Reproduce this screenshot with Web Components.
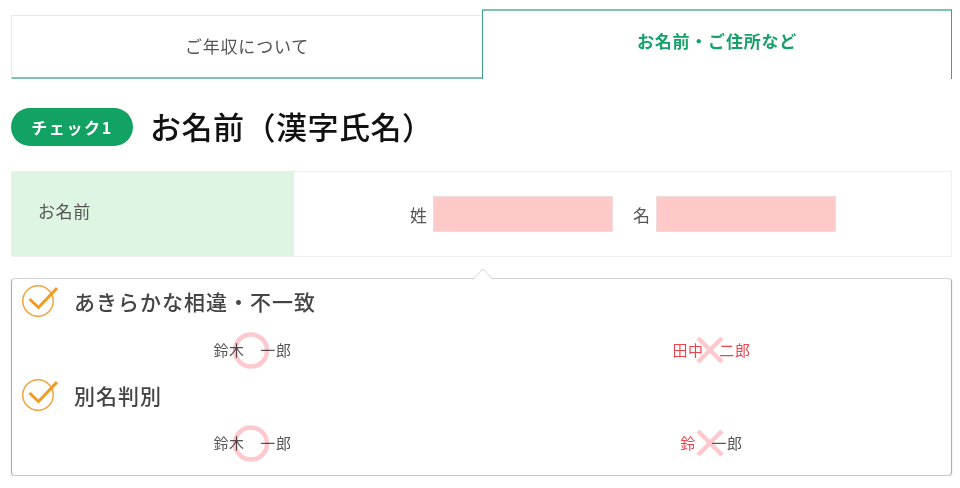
<!DOCTYPE html>
<html lang="ja">
<head>
<meta charset="utf-8">
<title>お名前</title>
<style>
html, body { margin: 0; background: #fff; }
body { font-family: "Noto Sans CJK JP", "Noto Sans", sans-serif; color: #444; }
</style>
</head>
<body>
<check-page>
    <tab-bar>
        <tab-item>ご年収について</tab-item>
        <tab-item active>お名前・ご住所など</tab-item>
    </tab-bar>
    <check-heading label="チェック1">お名前（漢字氏名）</check-heading>
    <name-form></name-form>
    <check-panel>
        <check-group title="あきらかな相違・不一致">
            <name-sample mark="ok"><span>鈴木　一郎</span></name-sample>
            <name-sample mark="ng"><span style="color:#ec444c">田中　二郎</span></name-sample>
        </check-group>
        <check-group title="別名判別">
            <name-sample mark="ok"><span>鈴木　一郎</span></name-sample>
            <name-sample mark="ng"><span style="color:#ec444c">鈴</span><span>　一郎</span></name-sample>
        </check-group>
    </check-panel>
</check-page>

<script>
class CheckPage extends HTMLElement {
    constructor() {
        super();
        let shadowRoot = this.attachShadow({mode: 'open'});
        shadowRoot.innerHTML = `
            <style>
                :host { display: block; width: 941px; padding: 9px 8px 0 11px; }
            </style>
            <slot></slot>`;
    }
}

class TabBar extends HTMLElement {
    constructor() {
        super();
        let shadowRoot = this.attachShadow({mode: 'open'});
        shadowRoot.innerHTML = `
            <style>
                :host { display: grid; grid-template-columns: 471px 470px; height: 70px; align-items: end; }
            </style>
            <slot></slot>`;
    }
}

class TabItem extends HTMLElement {
    constructor() {
        super();
        let shadowRoot = this.attachShadow({mode: 'open'});
        shadowRoot.innerHTML = `
            <style>
                :host {
                    display: flex; justify-content: center; align-items: center; box-sizing: border-box;
                    height: 64px; padding-bottom: 2px; font-size: 17px; letter-spacing: .8px; color: #555;
                    border: 1px solid #e8e8e8; border-right: 0; border-bottom: 2px solid #7ec4ab;
                }
                :host([active]) {
                    height: 70px; padding-bottom: 9px; color: #16a06a; font-weight: 700;
                    border: 1px solid #3f9f86; border-top: 2px solid #7ec4ab; border-bottom: 0;
                }
            </style>
            <slot></slot>`;
    }
}

class CheckHeading extends HTMLElement {
    constructor() {
        super();
        let shadowRoot = this.attachShadow({mode: 'open'});
        shadowRoot.innerHTML = `
            <style>
                :host { display: flex; align-items: center; gap: 17px; height: 38px; margin: 29px 0 25px; }
                .badge {
                    box-sizing: border-box; width: 122px; height: 38px; padding-bottom: 1px; border-radius: 19px;
                    background: #12a263; color: #fff;
                    display: flex; align-items: center; justify-content: center;
                    font-size: 16px; font-weight: 700; letter-spacing: 1.6px;
                }
                h2 { margin: 0; padding-bottom: 2px; font-size: 31px; font-weight: 500; color: #111; letter-spacing: .5px; line-height: 36px; white-space: nowrap; }
            </style>
            <span class="badge"></span>
            <h2><slot></slot></h2>`;
        shadowRoot.querySelector('.badge').textContent = this.getAttribute('label');
    }
}

class NameForm extends HTMLElement {
    constructor() {
        super();
        let shadowRoot = this.attachShadow({mode: 'open'});
        shadowRoot.innerHTML = `
            <style>
                :host { display: grid; grid-template-columns: 283px 1fr; height: 86px; box-sizing: border-box; border: 1px solid #eee; border-left: 0; font-size: 17px; letter-spacing: .6px; color: #555; }
                .label { background: #dff5e4; padding: 27px 0 0 27px; line-height: 24px; }
                .fields { display: flex; align-items: center; padding: 0 0 0 116px; }
                .fields span { width: 23px; }
                .fields span + input + span { margin-left: 20px; }
                input { box-sizing: border-box; width: 180px; height: 36px; margin: 0; padding: 0; background: #fdc9c9; border: 1px solid #eedcdc; border-radius: 0; }
            </style>
            <div class="label">お名前</div>
            <div class="fields">
                <span>姓</span><input type="text"><span>名</span><input type="text">
            </div>`;
    }
}

class CheckPanel extends HTMLElement {
    constructor() {
        super();
        let shadowRoot = this.attachShadow({mode: 'open'});
        shadowRoot.innerHTML = `
            <style>
                :host {
                    display: block; position: relative; box-sizing: border-box; height: 198px; margin-top: 21px;
                    padding: 0 11px 0 10px; background: #fff;
                    border: 1px solid #adadad; border-top-color: #d4d4d4; border-bottom-color: #c8c8c8; border-radius: 4px;
                    box-shadow: 0 1px 2px rgba(0,0,0,.14);
                }
                svg { position: absolute; left: 460px; top: -11px; }
            </style>
            <svg width="22" height="12" viewBox="0 0 22 12">
                <path d="M1 11.5 L11 1 L21 11.5" fill="#fff" stroke="#d4d4d4" stroke-width="1"/>
                <rect x="2" y="11" width="18" height="2" fill="#fff"/>
            </svg>
            <slot></slot>`;
    }
}

class CheckGroup extends HTMLElement {
    constructor() {
        super();
        let shadowRoot = this.attachShadow({mode: 'open'});
        shadowRoot.innerHTML = `
            <style>
                :host { display: block; }
                .title { display: flex; align-items: center; gap: 17px; height: 46px; font-size: 21px; font-weight: 500; letter-spacing: 1px; color: #444; }
                .title span { padding-bottom: 2px; margin-left: -1px; }
                svg { display: block; flex: none; }
                .samples { display: grid; grid-template-columns: 459px 459px; height: 47.5px; }
            </style>
            <div class="title">
                <svg width="36" height="36" viewBox="0 0 36 36">
                    <circle cx="16" cy="17" r="15.25" fill="none" stroke="#f2a43c" stroke-width="1.5"/>
                    <path d="M7.5 15 L16.5 23.5 L35 4" fill="none" stroke="#f39a24" stroke-width="3"/>
                </svg>
                <span id="t"></span>
            </div>
            <div class="samples"><slot></slot></div>`;
        shadowRoot.getElementById('t').textContent = this.getAttribute('title');
    }
}

class NameSample extends HTMLElement {
    constructor() {
        super();
        let shadowRoot = this.attachShadow({mode: 'open'});
        let ok = this.getAttribute('mark') == 'ok';
        shadowRoot.innerHTML = `
            <style>
                :host { display: flex; justify-content: center; align-items: center; box-sizing: border-box; padding: 2px 0 0 2px; font-size: 15px; letter-spacing: .6px; color: #555; }
                .name { position: relative; display: block; line-height: 20px; white-space: nowrap; }
                /* the marks sit behind the letters, so multiply them over the text */
                svg { position: absolute; left: calc(50% - 1px); top: 50%; transform: translate(-50%, -50%); mix-blend-mode: multiply; }
            </style>
            <div class="name">
                <slot></slot>
                ${ok
                    ? `<svg width="40" height="40" viewBox="0 0 40 40"><circle cx="20" cy="20.5" r="16" fill="none" stroke="#fdc9ce" stroke-width="4.5"/></svg>`
                    : `<svg width="32" height="32" viewBox="0 0 32 32"><path d="M4 4 L28 28 M28 4 L4 28" fill="none" stroke="#fdc9ce" stroke-width="4.5"/></svg>`}
            </div>`;
    }
}

window.customElements.define("check-page", CheckPage);
window.customElements.define("tab-bar", TabBar);
window.customElements.define("tab-item", TabItem);
window.customElements.define("check-heading", CheckHeading);
window.customElements.define("name-form", NameForm);
window.customElements.define("check-panel", CheckPanel);
window.customElements.define("check-group", CheckGroup);
window.customElements.define("name-sample", NameSample);
</script>
</body>
</html>
